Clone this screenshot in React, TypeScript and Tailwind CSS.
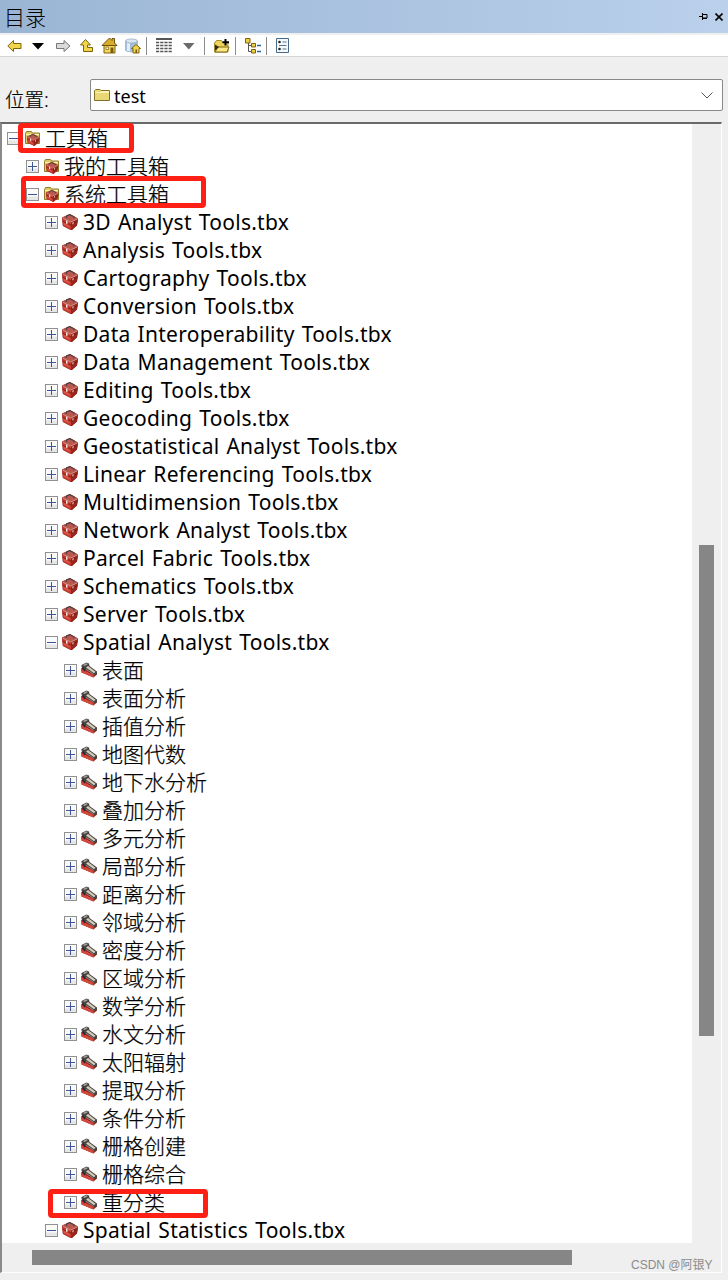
import React from 'react'

type IconKind = 'folder' | 'box' | 'hammer'

interface TreeNode {
  label: string
  level: number
  icon: IconKind
  open?: boolean
}

const toolboxes = [
  '3D Analyst Tools.tbx',
  'Analysis Tools.tbx',
  'Cartography Tools.tbx',
  'Conversion Tools.tbx',
  'Data Interoperability Tools.tbx',
  'Data Management Tools.tbx',
  'Editing Tools.tbx',
  'Geocoding Tools.tbx',
  'Geostatistical Analyst Tools.tbx',
  'Linear Referencing Tools.tbx',
  'Multidimension Tools.tbx',
  'Network Analyst Tools.tbx',
  'Parcel Fabric Tools.tbx',
  'Schematics Tools.tbx',
  'Server Tools.tbx',
]

const toolsets = [
  '表面',
  '表面分析',
  '插值分析',
  '地图代数',
  '地下水分析',
  '叠加分析',
  '多元分析',
  '局部分析',
  '距离分析',
  '邻域分析',
  '密度分析',
  '区域分析',
  '数学分析',
  '水文分析',
  '太阳辐射',
  '提取分析',
  '条件分析',
  '栅格创建',
  '栅格综合',
  '重分类',
]

const nodes: TreeNode[] = [
  { label: '工具箱', level: 0, icon: 'folder', open: true },
  { label: '我的工具箱', level: 1, icon: 'folder' },
  { label: '系统工具箱', level: 1, icon: 'folder', open: true },
  ...toolboxes.map((label): TreeNode => ({ label, level: 2, icon: 'box' })),
  { label: 'Spatial Analyst Tools.tbx', level: 2, icon: 'box', open: true },
  ...toolsets.map((label): TreeNode => ({ label, level: 3, icon: 'hammer' })),
  { label: 'Spatial Statistics Tools.tbx', level: 2, icon: 'box', open: true },
]

const indent = ['pl-[5px]', 'pl-[24px]', 'pl-[43px]', 'pl-[62px]']

const Toolbox = () => (
  <>
    <path d="M0 3.5 8 0l8 4.5-1 7L9.500 16.500.8 12z" fill="#8f211b" />
    <path d="M0 3.5 7.500.5 16 4.500 9 8z" fill="#b8584e" />
    <path d="M.2 4.200 9 8.500v7.500l-8-4.200z" fill="#c93a2f" />
    <path d="M9 8.500 16 4.800l-1 6.400L9.500 16H9z" fill="#95271f" />
    <path d="M.5 7 9 11.200l6.500-4" fill="none" stroke="#7b1813" strokeWidth=".8" />
    <path d="M4 4 5 1.500 8 .8l4 2v1.500" fill="none" stroke="#4a4040" strokeWidth="1.2" />
    <path d="M.8 4.300 8.800 8 15.500 4.800" fill="none" stroke="#eba79d" strokeWidth=".8" />
    <path d="M4 6.300v3.200l1.500.7V7z" fill="#f2e3db" />
    <path d="M10.500 8.500v2l1-.6V8z" fill="#f2e3db" />
    <path d="m2 10 5.500 2.800" stroke="#e4685c" strokeWidth="1" />
  </>
)

const NodeIcon: React.FC<{ kind: IconKind }> = ({ kind }) => (
  <svg className="ml-[4px] h-4 w-[17px] shrink-0" viewBox="0 0 17 16">
    {kind === 'box' && <Toolbox />}
    {kind === 'folder' && (
      <>
        <path d="M1.500 13.500v-10l1-2h5l1 1.500h7v10.500z" fill="#e0cb62" stroke="#927b28" />
        <path d="M2 4.500h13" stroke="#fff2ad" />
        <g transform="translate(3 4) scale(.77 .73)">
          <Toolbox />
        </g>
      </>
    )}
    {kind === 'hammer' && (
      <>
        <path d="M0 6.500 3 5l12 5 1 2.500-3.500 3L.5 10.500z" fill="#a92620" />
        <path d="m0 7 12.500 6v2.500L.5 10.500z" fill="#d4483d" />
        <path d="M.5 3 5.500.5 8 1.500l.5 2.500L16 9.500v2.500l-2 1.500L5.500 8 4 8.500.5 5z" fill="#474442" />
        <path d="M2 3 5.500 1.300l1.500.7L3.500 4z" fill="#aaa69e" />
        <path d="m5 5.500 2-1.500 7.500 5.800-1.500 1.500z" fill="#d5cebd" />
        <path d="m5 7.200 7.500 5" stroke="#8b8379" strokeWidth="1" />
        <path d="m1.500 5.500 2.500 3.500" stroke="#2b2828" strokeWidth="1.4" />
      </>
    )}
  </svg>
)

const Toggle: React.FC<{ open?: boolean }> = ({ open }) => (
  <svg className="h-[13px] w-[13px] shrink-0" viewBox="0 0 13 13">
    <rect x="0.5" y="0.5" width="12" height="12" fill="#fafafa" stroke="#919191" />
    <path d="M1 9.5h11M1 11h11" stroke="#e6e6e6" strokeWidth="2" />
    <path d="M2 6.5h9" stroke="#3d5597" />
    {!open && <path d="M6.5 2v9" stroke="#3d5597" />}
  </svg>
)

const TreeRow: React.FC<{ node: TreeNode }> = ({ node }) => (
  <div className={`flex h-7 shrink-0 items-center ${indent[node.level]}`}>
    <Toggle open={node.open} />
    <NodeIcon kind={node.icon} />
    <span
      className={
        node.icon === 'box'
          ? 'ml-[4px] text-[21px] leading-7 tracking-[0.27px] whitespace-nowrap [word-spacing:1.3px]'
          : 'ml-[4px] text-[21px] leading-7 font-light whitespace-nowrap [-webkit-text-stroke:0.25px_black]'
      }
    >
      {node.label}
    </span>
  </div>
)

const Divider = () => <div className="h-[18px] w-px bg-[#8c8c8c]" />

const Toolbar = () => (
  <div className="flex h-[22px] items-center border-b border-[#d5d5d5] bg-white">
    <svg className="ml-[7px] h-4 w-4" viewBox="0 0 16 16">
      <path d="M.8 8 6.5 2.5v3H14v5H6.5v3z" fill="#f1d54d" stroke="#80640b" />
    </svg>
    <svg className="ml-[9px] h-4 w-3" viewBox="0 0 12 16">
      <path d="M0 5h12l-6 6.5z" fill="#000" />
    </svg>
    <svg className="ml-[11px] h-4 w-4" viewBox="0 0 16 16">
      <path d="M15 8 9 2.5v3H1.5v5H9v3z" fill="#dadada" stroke="#777" />
    </svg>
    <svg className="ml-[8px] h-4 w-4" viewBox="0 0 16 16">
      <path d="M6.5 1.5 1.5 7h3v6.5h9v-4H8.5V7h3z" fill="#f1d54d" stroke="#80640b" />
    </svg>
    <svg className="ml-[6px] h-[17px] w-[17px]" viewBox="0 0 17 17">
      <path d="M3 8h11v8H3z" fill="#f3d75b" stroke="#80640b" />
      <path d="M1 8.5 8.5 1l2.5 2.5V1.5h2.5V6L16 8.5z" fill="#d9ac2c" stroke="#6c5311" />
      <path d="M9.5 10.5h3V16h-3z" fill="#7b5a17" />
      <path d="M5 10h2.5v2.5H5z" fill="#fff" stroke="#80640b" strokeWidth=".7" />
    </svg>
    <svg className="ml-[7px] h-4 w-4" viewBox="0 0 16 16">
      <path d="M0 3v9c0 3 13 3 13 0V3z" fill="#a3bed8" />
      <path d="M2 4v9h3V4z" fill="#e3edf6" />
      <ellipse cx="6.5" cy="3" rx="6" ry="2" fill="#dbe7f1" stroke="#8ba2b8" strokeWidth=".7" />
      <path d="m6.5 10.5 4.5-4 4.5 4H14V15H8v-4.5z" fill="#f1d54d" stroke="#80640b" />
      <path d="M10.5 11.5H12V15h-1.5z" fill="#7b5a17" />
    </svg>
    <div className="ml-[5px]"><Divider /></div>
    <svg className="ml-[9px] h-4 w-4" viewBox="0 0 16 16">
      <path d="M0 1h16" stroke="#555" strokeWidth="2" />
      <path
        d="M0 4.5h16M0 7.5h16M0 10.5h16M0 13.5h16"
        stroke="#555"
        strokeWidth="1.3"
        strokeDasharray="3.2 1"
      />
    </svg>
    <svg className="ml-[11px] h-4 w-3" viewBox="0 0 12 16">
      <path d="M0 5h11.5l-5.7 6.5z" fill="#6b6b6b" />
    </svg>
    <div className="ml-[9px]"><Divider /></div>
    <svg className="ml-[9px] h-4 w-4" viewBox="0 0 16 16">
      <path d="M.5 14V5l2-2.5h5l1 2H14V14z" fill="#edd45c" stroke="#a18a2d" />
      <path d="m1 14 3-5h11l-2 5z" fill="#fae78a" stroke="#80640b" />
      <path d="M11.5 1v6.500M8.500 4.200h6.500" stroke="#000" strokeWidth="2" />
      <path d="m1 6.5 4 2.500-4 3.500z" fill="#2d2818" />
    </svg>
    <div className="ml-[5px]"><Divider /></div>
    <svg className="ml-[9px] h-4 w-4" viewBox="0 0 16 16">
      <path d="M3.5 5v8.500H7M3.500 7.500H7" fill="none" stroke="#555" />
      <path d="M.5.5H5V5H.5zM6.500 5.500h4V9h-4zM6.500 11.500h4V15h-4z" fill="#edcf42" stroke="#80640b" />
      <path d="M12 7.500h4M12 13.500h4" stroke="#286799" strokeWidth="1.5" />
    </svg>
    <div className="ml-[5px]"><Divider /></div>
    <svg className="ml-[9px] h-[15px] w-[13px]" viewBox="0 0 13 15">
      <path d="M.5.5h12v14H.5z" fill="#f6f9fc" stroke="#486887" />
      <circle cx="3.5" cy="4" r="1.3" fill="#222" />
      <circle cx="3.5" cy="11" r="1.3" fill="#222" />
      <path d="M6.5 4h4M3 7.500h7.500M6.500 11h4" stroke="#56779a" />
    </svg>
  </div>
)

export default function App() {
  return (
    <div className="relative flex h-[1280px] w-[728px] flex-col overflow-hidden bg-[#efefef] font-['Noto_Sans','Noto_Sans_CJK_SC',sans-serif] text-black">
      {/* title bar */}
      <div className="flex h-[33px] shrink-0 items-center bg-linear-to-r from-[#9ab5d4] to-[#bad0eb] pl-[4px]">
        <span className="mt-[3px] flex-1 text-[21px] font-light">目录</span>
        <svg className="h-[9px] w-[9px]" viewBox="0 0 9 9">
          <path d="M0 4.5h3M3.5 1v7M4 2.500h4v3.500H4M4 6.500h4" fill="none" stroke="#000" />
        </svg>
        <svg className="mr-[5px] ml-[7px] h-2 w-2" viewBox="0 0 8 8">
          <path d="m.5.5 7 7m0-7-7 7" stroke="#000" strokeWidth="1.6" />
        </svg>
      </div>
      <div className="mt-[2px] shrink-0">
        <Toolbar />
      </div>

      {/* location */}
      <div className="mt-[22px] flex h-8 shrink-0 items-center pl-[5px]">
        <span className="mt-[10px] w-[85px] text-[19.5px] font-light [-webkit-text-stroke:0.2px_black]">
          位置:
        </span>
        <div className="flex h-8 w-[633px] items-center rounded-[2px] border border-[#888] bg-white pl-[3px]">
          <svg className="h-[14px] w-4" viewBox="0 0 16 14">
            <path d="M.5 12.500v-10l1-1H6l1 1h8.500v10z" fill="#ead775" stroke="#82712a" />
            <path d="M1 4.500h14M7 3.500h8" stroke="#fff3b0" />
          </svg>
          <span className="mt-[2px] ml-[4px] flex-1 text-[18px]">test</span>
          <svg className="mr-[9px] h-[7px] w-3" viewBox="0 0 12 7">
            <path d="m.5.5 5.500 5.500L11.500.5" fill="none" stroke="#555" />
          </svg>
        </div>
      </div>

      {/* tree */}
      <div className="mt-[11px] flex h-[1151px] w-[722px] shrink-0 flex-col border-t-2 border-r border-b border-l-2 border-t-[#696969] border-r-white border-b-white border-l-[#8a8a8a]">
        <div className="flex h-[1119px] shrink-0">
          <div className="flex w-[690px] flex-col overflow-hidden bg-white">
            {nodes.map((node) => (
              <TreeRow key={node.label} node={node} />
            ))}
          </div>
          <div className="pt-[421px] pl-[7px]">
            <div className="h-[491px] w-[15px] bg-[#868686]" />
          </div>
        </div>
        <div className="pt-[7px] pl-[30px]">
          <div className="h-[15px] w-[540px] bg-[#868686]" />
        </div>
      </div>

      {/* highlight marks over the tree */}
      <div className="absolute top-[123px] left-[18px] h-[30px] w-[116px] rounded-[4px] border-[5px] border-[#ff2015]" />
      <div className="absolute top-[176px] left-[21px] h-[32px] w-[185px] rounded-[4px] border-[5px] border-[#ff2015]" />
      <div className="absolute top-[1189px] left-[48px] h-[29px] w-[160px] rounded-[4px] border-[5px] border-[#ff2015]" />

      <span className="absolute top-[1257px] left-[631px] font-['Liberation_Sans','Noto_Sans_CJK_SC',sans-serif] text-[12px] leading-[17px] whitespace-nowrap text-[#8b8b8b]">
        CSDN @阿银Y
      </span>
    </div>
  )
}
